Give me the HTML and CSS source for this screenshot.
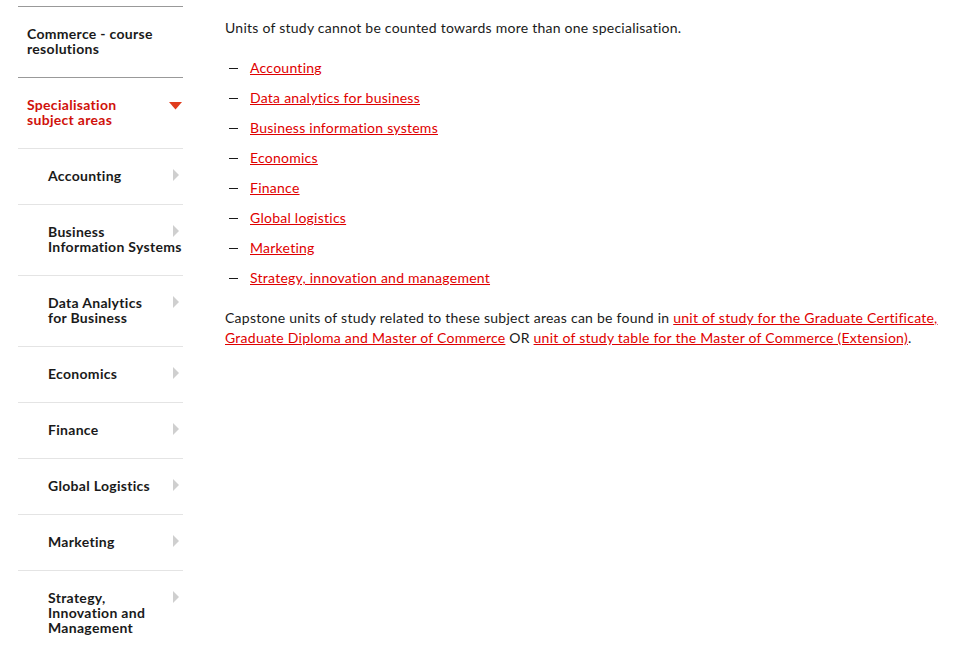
FILE: index.html
```html
<!DOCTYPE html>
<html lang="en">
<head>
<meta charset="utf-8">
<title>Specialisation subject areas</title>
<link rel="stylesheet" href="styles.css">
</head>
<body>
<div class="page">
  <nav class="sidenav">
    <a class="nav-item top" href="#">Commerce - course resolutions</a>
    <div class="nav-item active">
      <span>Specialisation subject areas</span>
      <svg class="caret-down" width="13" height="8" viewBox="0 0 13 8"><path d="M0 0H13L6.5 7.5Z" fill="#e03c1e"/></svg>
    </div>
    <a class="nav-item sub" href="#"><span>Accounting</span><svg class="caret-right" width="6" height="12" viewBox="0 0 6 12"><path d="M0 0L6 6L0 12Z" fill="#cfcfcf"/></svg></a>
    <a class="nav-item sub" href="#"><span>Business<br><span class="nowrap">Information Systems</span></span><svg class="caret-right" width="6" height="12" viewBox="0 0 6 12"><path d="M0 0L6 6L0 12Z" fill="#cfcfcf"/></svg></a>
    <a class="nav-item sub" href="#"><span>Data Analytics<br>for Business</span><svg class="caret-right" width="6" height="12" viewBox="0 0 6 12"><path d="M0 0L6 6L0 12Z" fill="#cfcfcf"/></svg></a>
    <a class="nav-item sub" href="#"><span>Economics</span><svg class="caret-right" width="6" height="12" viewBox="0 0 6 12"><path d="M0 0L6 6L0 12Z" fill="#cfcfcf"/></svg></a>
    <a class="nav-item sub" href="#"><span>Finance</span><svg class="caret-right" width="6" height="12" viewBox="0 0 6 12"><path d="M0 0L6 6L0 12Z" fill="#cfcfcf"/></svg></a>
    <a class="nav-item sub" href="#"><span>Global Logistics</span><svg class="caret-right" width="6" height="12" viewBox="0 0 6 12"><path d="M0 0L6 6L0 12Z" fill="#cfcfcf"/></svg></a>
    <a class="nav-item sub" href="#"><span>Marketing</span><svg class="caret-right" width="6" height="12" viewBox="0 0 6 12"><path d="M0 0L6 6L0 12Z" fill="#cfcfcf"/></svg></a>
    <a class="nav-item sub last" href="#"><span>Strategy,<br>Innovation and<br>Management</span><svg class="caret-right" width="6" height="12" viewBox="0 0 6 12"><path d="M0 0L6 6L0 12Z" fill="#cfcfcf"/></svg></a>
  </nav>
  <main class="content">
    <p class="intro">Units of study cannot be counted towards more than one specialisation.</p>
    <ul class="dash-list">
      <li><a href="#">Accounting</a></li>
      <li><a href="#">Data analytics for business</a></li>
      <li><a href="#">Business information systems</a></li>
      <li><a href="#">Economics</a></li>
      <li><a href="#">Finance</a></li>
      <li><a href="#">Global logistics</a></li>
      <li><a href="#">Marketing</a></li>
      <li><a href="#">Strategy, innovation and management</a></li>
    </ul>
    <p class="note">Capstone units of study related to these subject areas can be found in <a href="#">unit of study for the Graduate Certificate, Graduate Diploma and Master of Commerce</a> OR <a href="#">unit of study table for the Master of Commerce (Extension)</a>.</p>
  </main>
</div>
</body>
</html>
```

FILE: styles.css
```css
html, body {
  margin: 0;
  padding: 0;
  background: #fff;
}
body {
  font-family: "Lato", "Liberation Sans", sans-serif;
  color: #1a1a1a;
}
.page {
  display: flex;
  align-items: flex-start;
  padding: 6px 0 0 18px;
}
.sidenav {
  width: 165px;
  flex: none;
  border-top: 1px solid #999;
}
.nav-item {
  position: relative;
  display: block;
  padding: 19px 24px 21px 9px;
  font-size: 14px;
  line-height: 15px;
  letter-spacing: 0.3px;
  font-weight: 700;
  color: #1a1a1a;
  text-decoration: none;
  border-bottom: 1px solid #e4e4e4;
}
.nowrap {
  white-space: nowrap;
}
.nav-item.top {
  border-bottom-color: #999;
  padding-right: 0;
}
.nav-item.active {
  color: #d0110b;
}
.caret-down {
  position: absolute;
  top: 24px;
  right: 1px;
}
.nav-item.sub {
  padding-left: 30px;
  padding-right: 0;
}
.nav-item.last {
  border-bottom: none;
}
.caret-right {
  position: absolute;
  top: 20px;
  right: 4px;
}
.content {
  margin-left: 42px;
  padding-top: 12px;
  font-size: 14px;
  line-height: 20px;
  letter-spacing: 0.25px;
  flex: 1;
}
.content p {
  margin: 0;
}
.content a {
  color: #e00000;
  text-decoration: underline;
}
.dash-list {
  list-style: none;
  margin: 20px 0 20px 0;
  padding: 0;
}
.dash-list li {
  display: flex;
  align-items: center;
  height: 20px;
  margin-bottom: 10px;
}
.dash-list li::before {
  content: "";
  flex: none;
  width: 9px;
  height: 1px;
  background: #1a1a1a;
  margin: 1px 12px 0 4px;
}
.dash-list li:last-child {
  margin-bottom: 0;
}
.note {
  margin-top: 0;
  padding-right: 15px;
}
```
